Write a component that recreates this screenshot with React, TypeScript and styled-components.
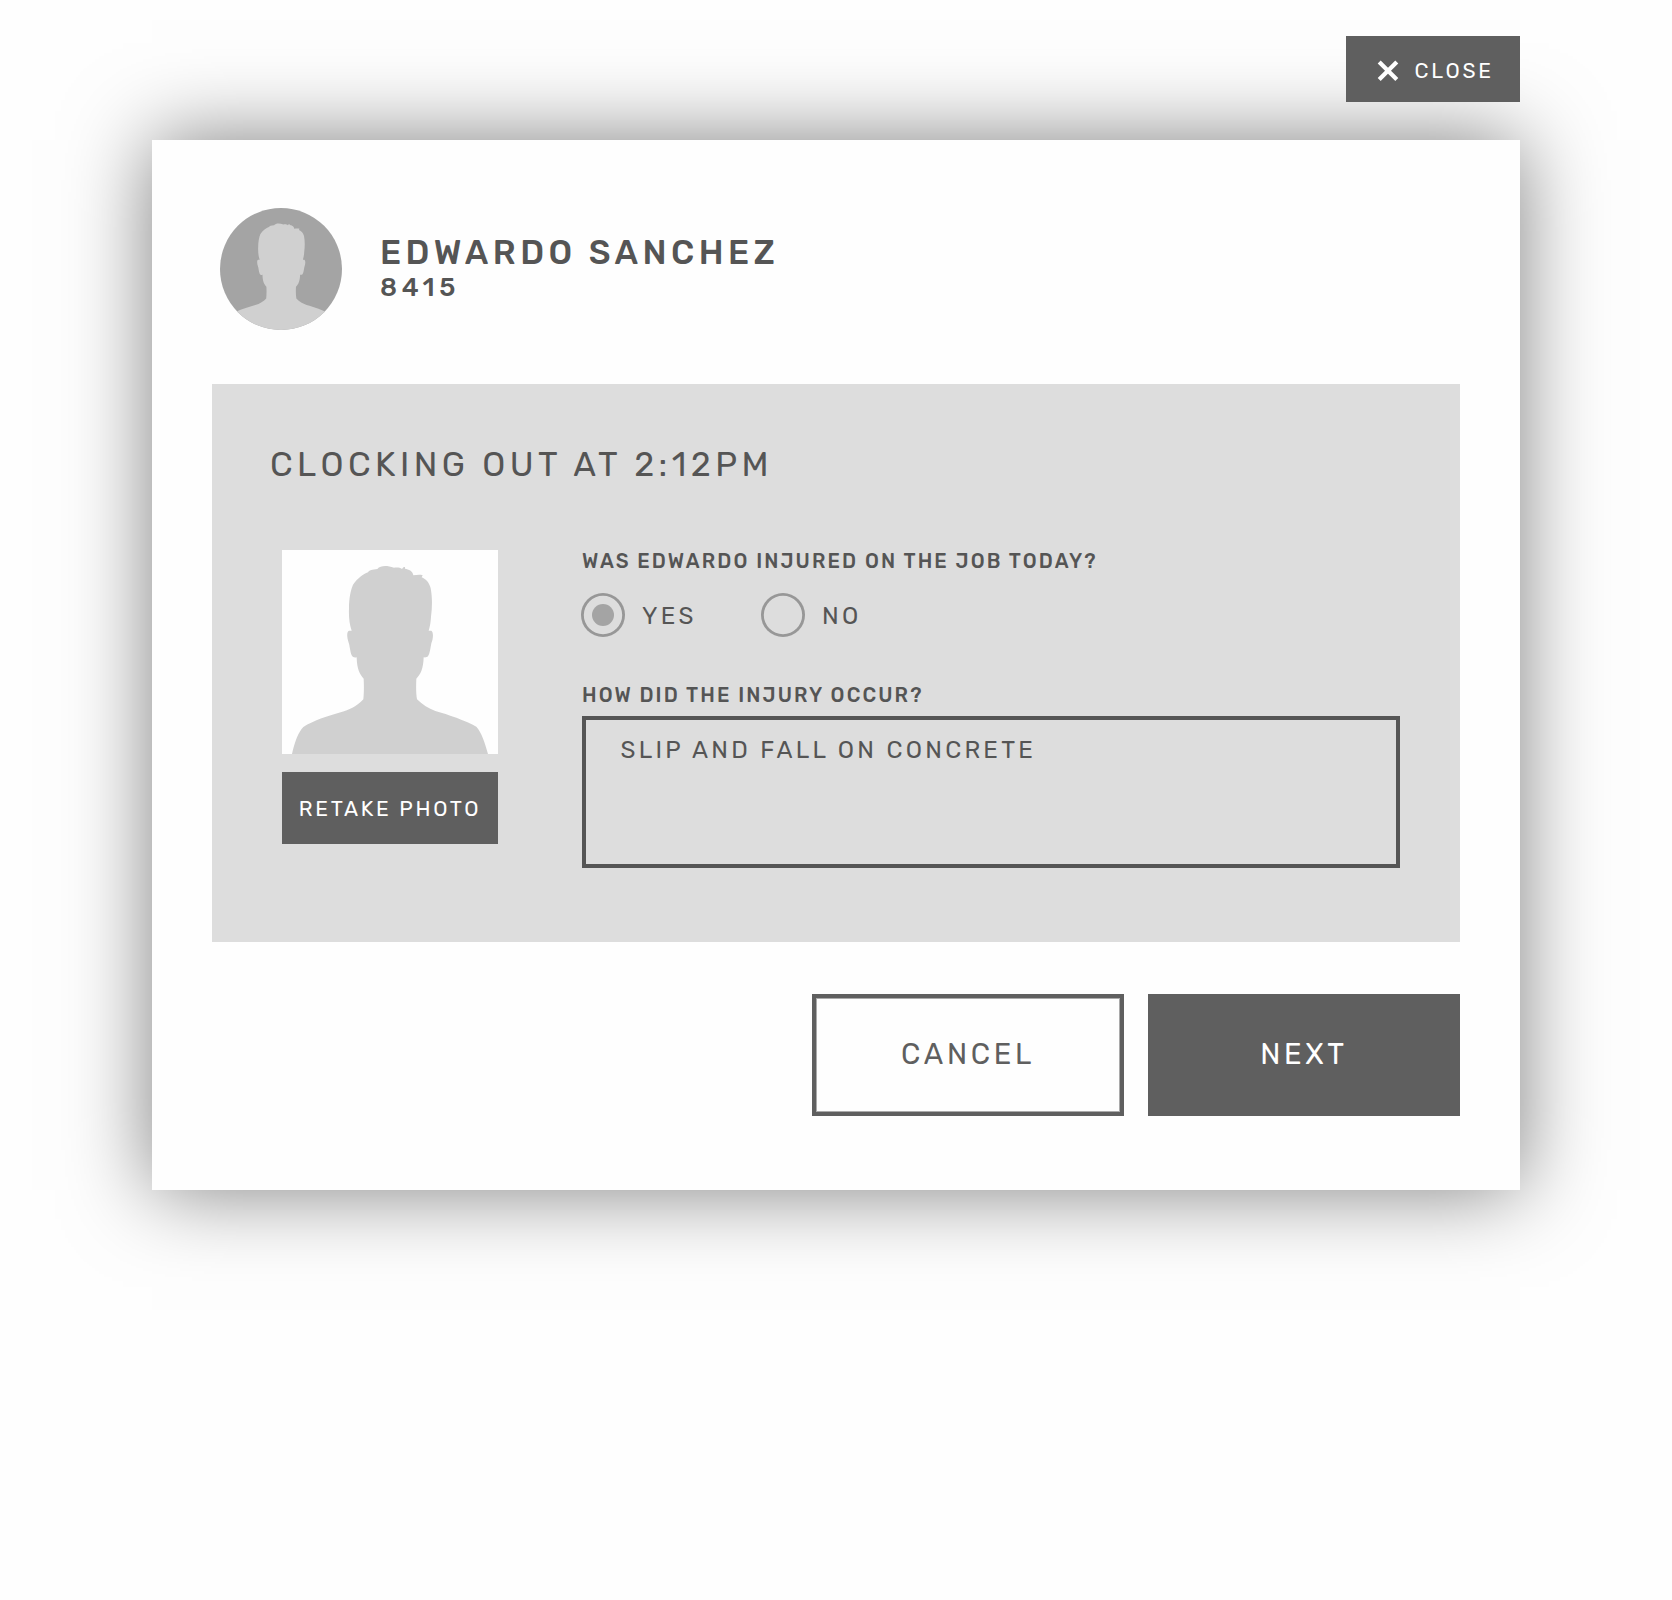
import React, { useState } from "react";
import styled, { createGlobalStyle } from "styled-components";

const color = {
  ink: "#555555",
  button: "#5f5f5f",
  panel: "#dddddd",
  silhouette: "#d0d0d0",
  muted: "#a4a4a4",
  ring: "#979797",
  surface: "#fefefe",
};

const GlobalStyle = createGlobalStyle`
  *, *::before, *::after { box-sizing: border-box; }
  body {
    margin: 0;
    background: ${color.surface};
    color: ${color.ink};
    font-family: Rubik, Roboto, "Liberation Sans", sans-serif;
    -webkit-font-smoothing: antialiased;
  }
  button, textarea { font-family: inherit; color: inherit; margin: 0; border-radius: 0; }
`;

const Page = styled.main`
  display: flex;
  flex-direction: column;
  min-height: 1600px;
  padding: 36px 152px 0;
`;

const CloseButton = styled.button`
  position: relative;
  z-index: 1;
  align-self: flex-end;
  display: flex;
  align-items: center;
  gap: 15.5px;
  width: 174px;
  height: 66px;
  margin-bottom: 38px;
  padding: 3px 0 0 31px;
  border: 0;
  background: ${color.button};
  color: #fff;
  font-size: 21px;
  letter-spacing: 2.75px;
`;

const Modal = styled.section`
  display: flex;
  flex-direction: column;
  height: 1050px;
  padding: 68px 60px 0;
  background: ${color.surface};
  box-shadow: 0 0 80px rgba(0, 0, 0, 0.5);
`;

const Employee = styled.header`
  display: flex;
  align-items: center;
  gap: 38px;
  height: 122px;
  margin: 0 0 54px 8px;
`;

const Avatar = styled.div`
  width: 122px;
  height: 122px;
  border-radius: 50%;
  overflow: hidden;
  background: ${color.muted};
`;

const Identity = styled.div`
  display: flex;
  flex-direction: column;
  padding-bottom: 1px;
`;

const Name = styled.h1`
  margin: 0;
  font-size: 34px;
  font-weight: 500;
  line-height: 38px;
  letter-spacing: 4.42px;
`;

const EmployeeId = styled.span`
  font-size: 26px;
  font-weight: 500;
  line-height: 31px;
  letter-spacing: 4.6px;
`;

const Panel = styled.div`
  height: 558px;
  padding: 61px 60px 0 58px;
  background: ${color.panel};
`;

const PanelTitle = styled.h2`
  margin: 0 0 65px;
  font-size: 34px;
  font-weight: 400;
  line-height: 40px;
  letter-spacing: 4.48px;
`;

const PanelBody = styled.div`
  display: flex;
  gap: 84px;
  padding-left: 12px;
`;

const PhotoColumn = styled.div`
  display: flex;
  flex: none;
  flex-direction: column;
  gap: 18px;
  width: 216px;
`;

const Photo = styled.div`
  height: 204px;
  background: ${color.surface};
`;

const Silhouette = styled.svg`
  display: block;
  width: 100%;
  height: 100%;
  fill: ${color.silhouette};
`;

const RetakeButton = styled.button`
  height: 72px;
  padding: 0;
  border: 0;
  background: ${color.button};
  color: #fff;
  font-size: 21px;
  letter-spacing: 2.7px;
  white-space: nowrap;
`;

const Form = styled.form`
  display: flex;
  flex: 1;
  flex-direction: column;
`;

const Question = styled.label`
  font-size: 20px;
  font-weight: 500;
  line-height: 22px;
  letter-spacing: 2.11px;
`;

const Options = styled.div`
  display: flex;
  margin: 21px 0 47px -1px;
`;

const Option = styled.label`
  display: flex;
  align-items: center;
  gap: 17px;
  width: 180px;
  height: 44px;
  font-size: 24px;
  line-height: 30px;
  letter-spacing: 3.25px;
`;

const OptionText = styled.span`
  padding-top: 2px;
`;

const Radio = styled.input.attrs({ type: "radio" })`
  appearance: none;
  display: grid;
  place-items: center;
  width: 44px;
  height: 44px;
  margin: 0;
  border-radius: 50%;
  box-shadow: inset 0 0 0 2.8px ${color.ring};

  &:checked::before {
    content: "";
    width: 22px;
    height: 22px;
    border-radius: 50%;
    background: ${color.muted};
  }
`;

const Answer = styled.textarea`
  && {
    display: block;
    width: 100%;
    height: 152px;
    margin-top: 10px;
    padding: 16px 34.6px;
    border: 4px solid ${color.ink};
    outline: none;
    resize: none;
    background: transparent;
    font-size: 24px;
    line-height: 28px;
    letter-spacing: 3.26px;
  }
`;

const Actions = styled.footer`
  display: flex;
  justify-content: flex-end;
  gap: 24px;
  margin-top: 52px;
`;

const ActionButton = styled.button<{ $outlined?: boolean }>`
  width: 312px;
  height: 122px;
  padding: 0 0 3px;
  border: 4px solid ${color.button};
  background: ${(p) => (p.$outlined ? color.surface : color.button)};
  color: ${(p) => (p.$outlined ? color.button : "#fff")};
  box-shadow: ${(p) => (p.$outlined ? "inset 0 0 0 1px #aaa" : "none")};
  font-size: 29px;
  letter-spacing: 3.65px;
`;

function Person({ viewBox }: { viewBox: string }) {
  return (
    <Silhouette viewBox={viewBox} preserveAspectRatio="none" aria-hidden="true">
      <path d="M60 670 L66 642 C74 605 86 575 100 561 C130 542 175 527 222 514 C245 507 268 492 280 478 C282 460 282 435 281 416 C268 400 261 388 260 352 C254 354 248 352 245 346 C240 333 239 315 236 308 C230 290 230 275 237 272 L245 272 C238 250 236 230 237 205 C237 175 242 150 249 134 C262 116 280 102 294 97 C296 91 308 88 322 87 C332 76 350 76 372 83 C380 82 390 82 396 87 L400 82 L405 81 L405 86 C416 88 428 92 430 106 C438 105 450 103 458 106 L455 112 C468 118 478 128 482 145 C487 170 487 200 483 230 C482 248 480 258 476 272 L484 272 C490 276 491 292 484 310 C481 325 480 340 474 349 C471 352 466 353 461 352 C460 385 453 402 439 416 C438 440 438 460 441 478 C458 495 475 505 496 513 C535 524 585 541 619 560 C634 575 645 610 654 642 L660 670 Z" />
    </Silhouette>
  );
}

function CrossIcon() {
  return (
    <svg width="22" height="22" viewBox="0 0 22 22" fill="none" stroke="#fff" strokeWidth="4.2" aria-hidden="true">
      <path d="M2.2 1.9 L19.8 19.5 M19.8 1.9 L2.2 19.5" />
    </svg>
  );
}

export default function App() {
  const [injured, setInjured] = useState(true);
  const [cause, setCause] = useState("SLIP AND FALL ON CONCRETE");

  return (
    <>
      <GlobalStyle />
      <Page>
        <CloseButton type="button">
          <CrossIcon />
          CLOSE
        </CloseButton>
        <Modal>
          <Employee>
            <Avatar>
              <Person viewBox="33 -5 652 652" />
            </Avatar>
            <Identity>
              <Name>EDWARDO SANCHEZ</Name>
              <EmployeeId>8415</EmployeeId>
            </Identity>
          </Employee>
          <Panel>
            <PanelTitle>CLOCKING OUT AT 2:12PM</PanelTitle>
            <PanelBody>
              <PhotoColumn>
                <Photo>
                  <Person viewBox="36 30 648 612" />
                </Photo>
                <RetakeButton type="button">RETAKE PHOTO</RetakeButton>
              </PhotoColumn>
              <Form>
                <Question as="span">WAS EDWARDO INJURED ON THE JOB TODAY?</Question>
                <Options>
                  <Option>
                    <Radio name="injured" checked={injured} onChange={() => setInjured(true)} />
                    <OptionText>YES</OptionText>
                  </Option>
                  <Option>
                    <Radio name="injured" checked={!injured} onChange={() => setInjured(false)} />
                    <OptionText>NO</OptionText>
                  </Option>
                </Options>
                <Question htmlFor="cause">HOW DID THE INJURY OCCUR?</Question>
                <Answer id="cause" spellCheck={false} value={cause} onChange={(e) => setCause(e.target.value)} />
              </Form>
            </PanelBody>
          </Panel>
          <Actions>
            <ActionButton type="button" $outlined>
              CANCEL
            </ActionButton>
            <ActionButton type="button">NEXT</ActionButton>
          </Actions>
        </Modal>
      </Page>
    </>
  );
}
